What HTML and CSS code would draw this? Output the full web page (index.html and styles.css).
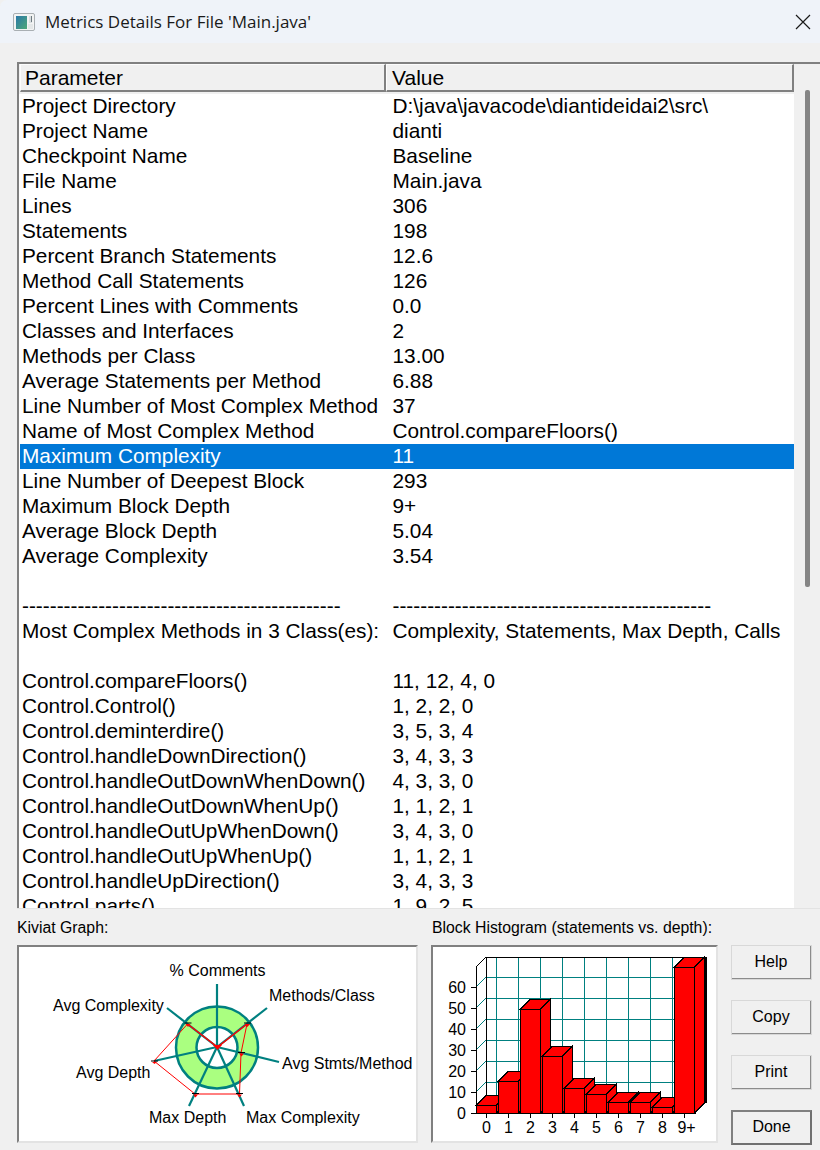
FILE: index.html
```html
<!DOCTYPE html>
<html lang="en">
<head>
<meta charset="utf-8">
<title>Metrics Details For File 'Main.java'</title>
<link rel="stylesheet" href="styles.css">
</head>
<body>
<div class="window">
  <header class="titlebar">
    <svg class="app-icon" viewBox="0 0 23 20" width="23" height="20">
      <defs><linearGradient id="ig" x1="0" y1="0" x2="1" y2="1"><stop offset="0" stop-color="#2a78a8"/><stop offset="1" stop-color="#4fa878"/></linearGradient></defs>
      <rect x="0.500" y="1.500" width="21" height="17" rx="1.500" fill="#f2f3f3" stroke="#a9afb3"/>
      <rect x="3" y="4" width="11" height="13" fill="url(#ig)"/>
      <rect x="16" y="4" width="3" height="7" fill="#d8dde0"/>
      <rect x="18" y="4" width="1" height="6" fill="#6d7a80"/>
      <rect x="15" y="12" width="5" height="5" fill="#e4e7e8"/>
    </svg>
    <span class="title">Metrics Details For File 'Main.java'</span>
    <svg class="close" viewBox="0 0 16 16" width="16" height="16"><path d="M1 1 L15 15 M15 1 L1 15" stroke="#1a1a1a" stroke-width="1.2" fill="none"/></svg>
  </header>

  <section class="list">
    <div class="list-main">
      <div class="list-head">
        <div class="hcell hcell-a">Parameter</div>
        <div class="hcell hcell-b">Value</div>
      </div>
      <div class="rows">
        <div class="row"><span>Project Directory</span><span>D:\java\javacode\diantideidai2\src\</span></div>
        <div class="row"><span>Project Name</span><span>dianti</span></div>
        <div class="row"><span>Checkpoint Name</span><span>Baseline</span></div>
        <div class="row"><span>File Name</span><span>Main.java</span></div>
        <div class="row"><span>Lines</span><span>306</span></div>
        <div class="row"><span>Statements</span><span>198</span></div>
        <div class="row"><span>Percent Branch Statements</span><span>12.6</span></div>
        <div class="row"><span>Method Call Statements</span><span>126</span></div>
        <div class="row"><span>Percent Lines with Comments</span><span>0.0</span></div>
        <div class="row"><span>Classes and Interfaces</span><span>2</span></div>
        <div class="row"><span>Methods per Class</span><span>13.00</span></div>
        <div class="row"><span>Average Statements per Method</span><span>6.88</span></div>
        <div class="row"><span>Line Number of Most Complex Method</span><span>37</span></div>
        <div class="row"><span>Name of Most Complex Method</span><span>Control.compareFloors()</span></div>
        <div class="row row-selected"><span>Maximum Complexity</span><span>11</span></div>
        <div class="row"><span>Line Number of Deepest Block</span><span>293</span></div>
        <div class="row"><span>Maximum Block Depth</span><span>9+</span></div>
        <div class="row"><span>Average Block Depth</span><span>5.04</span></div>
        <div class="row"><span>Average Complexity</span><span>3.54</span></div>
        <div class="row"></div>
        <div class="row"><span>----------------------------------------------</span><span>----------------------------------------------</span></div>
        <div class="row"><span>Most Complex Methods in 3 Class(es):</span><span>Complexity, Statements, Max Depth, Calls</span></div>
        <div class="row"></div>
        <div class="row"><span>Control.compareFloors()</span><span>11, 12, 4, 0</span></div>
        <div class="row"><span>Control.Control()</span><span>1, 2, 2, 0</span></div>
        <div class="row"><span>Control.deminterdire()</span><span>3, 5, 3, 4</span></div>
        <div class="row"><span>Control.handleDownDirection()</span><span>3, 4, 3, 3</span></div>
        <div class="row"><span>Control.handleOutDownWhenDown()</span><span>4, 3, 3, 0</span></div>
        <div class="row"><span>Control.handleOutDownWhenUp()</span><span>1, 1, 2, 1</span></div>
        <div class="row"><span>Control.handleOutUpWhenDown()</span><span>3, 4, 3, 0</span></div>
        <div class="row"><span>Control.handleOutUpWhenUp()</span><span>1, 1, 2, 1</span></div>
        <div class="row"><span>Control.handleUpDirection()</span><span>3, 4, 3, 3</span></div>
        <div class="row"><span>Control.parts()</span><span>1, 9, 2, 5</span></div>
      </div>
    </div>
    <div class="scrollbar"><div class="thumb"></div></div>
  </section>

  <section class="bottom">
    <div class="col col-kiviat">
      <div class="caption">Kiviat Graph:</div>
      <div class="panel">
        <svg class="chart" viewBox="19 947 397 194" width="397" height="194">
          <circle cx="217" cy="1047.500" r="41" fill="#aaff80" stroke="#008080" stroke-width="2.500"/>
          <circle cx="217" cy="1047.500" r="20.500" fill="#fff" stroke="#008080" stroke-width="2.500"/>
          <g stroke="#008080" stroke-width="2.200" fill="none">
            <path d="M217 1047 V984"/>
            <path d="M217 1047 L267 1008"/>
            <path d="M217 1047 L279 1062"/>
            <path d="M217 1047 L244 1106"/>
            <path d="M217 1047 L189 1106"/>
            <path d="M217 1047 L154 1061"/>
            <path d="M217 1047 L167 1008"/>
          </g>
          <path d="M247 1024 L241 1053 L239.500 1094 L195 1094 L154 1061 L187.500 1024" stroke="#ff0000" stroke-width="1" fill="none"/>
          <path d="M187.500 1024 L217.500 1047 L247 1024" stroke="#ff0000" stroke-width="1.400" fill="none"/>
          <path d="M184.500 1023 H191.500 M244 1023 H251 M238 1052.500 H245 M192 1093.500 H199 M236 1093.500 H243 M151 1061 H158" stroke="#000" stroke-width="1.200"/>
          <g fill="#ff0000">
            <path d="M185.500 1024 H190.500 L188 1027 Z"/>
            <path d="M245 1024 H250 L247.500 1027 Z"/>
            <path d="M239 1053.500 H244 L241.500 1056.500 Z"/>
            <path d="M193 1094.500 H198 L195.500 1097.500 Z"/>
            <path d="M237 1094.500 H242 L239.500 1097.500 Z"/>
            <path d="M152 1062 H157 L154.500 1064 Z"/>
            <path d="M213 1045 H222 L217.500 1050 Z"/>
          </g>
          <g class="chart-text">
            <text x="169.500" y="976">% Comments</text>
            <text x="269" y="1001">Methods/Class</text>
            <text x="53" y="1011">Avg Complexity</text>
            <text x="282" y="1069">Avg Stmts/Method</text>
            <text x="76" y="1078">Avg Depth</text>
            <text x="149" y="1123">Max Depth</text>
            <text x="246" y="1123">Max Complexity</text>
          </g>
        </svg>
      </div>
    </div>

    <div class="col col-hist">
      <div class="caption">Block Histogram (statements vs. depth):</div>
      <div class="panel">
        <svg class="chart" viewBox="433 947 282 194" width="282" height="194" shape-rendering="crispEdges">
          <g stroke="#008080" fill="none">
            <path d="M486 977 H706 M486 998 H706 M486 1019 H706 M486 1040 H706 M486 1061 H706 M486 1082 H706"/>
            <path d="M496 957 V1103 M518 957 V1103 M540 957 V1103 M562 957 V1103 M584 957 V1103 M606 957 V1103 M628 957 V1103 M650 957 V1103 M672 957 V1103"/>
            <path d="M476 987 L486 977 M476 1008 L486 998 M476 1029 L486 1019 M476 1050 L486 1040 M476 1071 L486 1061 M476 1092 L486 1082"/>
          </g>
          <path d="M486 957 H705 M486 957 V1103 M476 967 V1113 M476 1113 H696" stroke="#000" fill="none"/>
          <path d="M476 967 L486 957" stroke="#000" fill="none"/>
          <path d="M471 987 H476 M471 1008 H476 M471 1029 H476 M471 1050 H476 M471 1071 H476 M471 1092 H476 M471 1113 H476 M486 1113 V1118 M508 1113 V1118 M530 1113 V1118 M552 1113 V1118 M574 1113 V1118 M596 1113 V1118 M618 1113 V1118 M640 1113 V1118 M662 1113 V1118 M684 1113 V1118" stroke="#000" fill="none"/>
          <g class="bars" fill="#ff0000" stroke="#000">
            <path d="M476.500 1105 L486.500 1095 H506.500 L496.500 1105 Z M496.500 1105 L506.500 1095 V1103 L496.500 1113 Z M476.500 1105 H496.500 V1113 H476.500 Z"/>
            <path d="M498.500 1081 L508.500 1071 H528.500 L518.500 1081 Z M518.500 1081 L528.500 1071 V1103 L518.500 1113 Z M498.500 1081 H518.500 V1113 H498.500 Z"/>
            <path d="M520.500 1009 L530.500 999 H550.500 L540.500 1009 Z M540.500 1009 L550.500 999 V1103 L540.500 1113 Z M520.500 1009 H540.500 V1113 H520.500 Z"/>
            <path d="M542.500 1056 L552.500 1046 H572.500 L562.500 1056 Z M562.500 1056 L572.500 1046 V1103 L562.500 1113 Z M542.500 1056 H562.500 V1113 H542.500 Z"/>
            <path d="M564.500 1088 L574.500 1078 H594.500 L584.500 1088 Z M584.500 1088 L594.500 1078 V1103 L584.500 1113 Z M564.500 1088 H584.500 V1113 H564.500 Z"/>
            <path d="M586.500 1094 L596.500 1084 H616.500 L606.500 1094 Z M606.500 1094 L616.500 1084 V1103 L606.500 1113 Z M586.500 1094 H606.500 V1113 H586.500 Z"/>
            <path d="M608.500 1102 L618.500 1092 H638.500 L628.500 1102 Z M628.500 1102 L638.500 1092 V1103 L628.500 1113 Z M608.500 1102 H628.500 V1113 H608.500 Z"/>
            <path d="M630.500 1102 L640.500 1092 H660.500 L650.500 1102 Z M650.500 1102 L660.500 1092 V1103 L650.500 1113 Z M630.500 1102 H650.500 V1113 H630.500 Z"/>
            <path d="M652.500 1107 L662.500 1097 H682.500 L672.500 1107 Z M672.500 1107 L682.500 1097 V1103 L672.500 1113 Z M652.500 1107 H672.500 V1113 H652.500 Z"/>
            <path d="M674.500 967 L684.500 957 H704.500 L694.500 967 Z M694.500 967 L704.500 957 V1103 L694.500 1113 Z M674.500 967 H694.500 V1113 H674.500 Z"/>
          </g>
          <path d="M705.500 957 V1103" stroke="#000" stroke-width="2" fill="none"/>
          <g class="chart-text chart-text-axis">
            <text x="466" y="993">60</text>
            <text x="466" y="1014">50</text>
            <text x="466" y="1035">40</text>
            <text x="466" y="1056">30</text>
            <text x="466" y="1077">20</text>
            <text x="466" y="1098">10</text>
            <text x="466" y="1119">0</text>
          </g>
          <g class="chart-text chart-text-mid">
            <text x="486.500" y="1133">0</text>
            <text x="508.500" y="1133">1</text>
            <text x="530.500" y="1133">2</text>
            <text x="552.500" y="1133">3</text>
            <text x="574.500" y="1133">4</text>
            <text x="596.500" y="1133">5</text>
            <text x="618.500" y="1133">6</text>
            <text x="640.500" y="1133">7</text>
            <text x="662.500" y="1133">8</text>
            <text x="686.500" y="1133">9+</text>
          </g>
        </svg>
      </div>
    </div>

    <div class="buttons">
      <button class="btn" type="button">Help</button>
      <button class="btn" type="button">Copy</button>
      <button class="btn" type="button">Print</button>
      <button class="btn btn-default" type="button">Done</button>
    </div>
  </section>
</div>
</body>
</html>
```

FILE: styles.css
```css
* { box-sizing: border-box; }

html, body {
  margin: 0;
  padding: 0;
  width: 820px;
  height: 1150px;
  overflow: hidden;
  background: #f0f0f0;
}

.window {
  width: 820px;
  height: 1150px;
  display: flex;
  flex-direction: column;
  font-family: "Liberation Sans", Arial, sans-serif;
  color: #000;
}

.titlebar {
  height: 43px;
  flex: none;
  display: flex;
  align-items: center;
  padding: 0 9px 0 13px;
  background: #eff3f9;
  border-top-left-radius: 7px;
}

.app-icon { flex: none; }

.title {
  flex: 1;
  margin-left: 9px;
  font-family: "Open Sans", "Noto Sans", sans-serif;
  font-size: 17px;
  color: #1a1a1a;
}

.close { flex: none; }

.list {
  flex: none;
  height: 847px;
  margin-top: 19px;
  margin-left: 17px;
  display: flex;
  border-top: 2px solid #808080;
  border-bottom: 1px solid #e3e3e3;
}

.list-main {
  width: 778px;
  flex: none;
  display: flex;
  flex-direction: column;
  border-left: 2px solid #808080;
  overflow: hidden;
}

.list-head {
  flex: none;
  display: flex;
  height: 30px;
  padding-left: 1px;
}

.hcell {
  height: 28px;
  font-size: 21px;
  line-height: 26px;
  padding-left: 4px;
  background: #f0f0f0;
  border-top: 1px solid #fcfcfc;
  border-left: 1px solid #fcfcfc;
  border-right: 2px solid #808080;
  border-bottom: 2px solid #808080;
}

.hcell-a { width: 366px; }
.hcell-b { width: 408px; padding-left: 5px; }

.rows {
  flex: 1;
  overflow: hidden;
  background: #fff;
  margin-right: 1px;
  border-left: 1px solid #fff;
}

.row {
  display: flex;
  height: 25px;
  padding-left: 2px;
  font-size: 20.800px;
  line-height: 23px;
  white-space: nowrap;
}

.row span:first-child { width: 370.500px; flex: none; }

.row-selected {
  background: #0078d7;
  color: #fff;
}

.scrollbar {
  flex: 1;
  padding: 26px 0 0 10px;
}

.thumb {
  width: 5px;
  height: 497px;
  border-radius: 2px;
  background: #858585;
}

.bottom {
  flex: 1;
  display: flex;
  padding-left: 17px;
}

.col { display: flex; flex-direction: column; }
.col-kiviat { width: 401px; margin-right: 13px; }
.col-hist { width: 287px; margin-right: 13px; }

.caption {
  height: 36px;
  padding-top: 9px;
  font-size: 15.800px;
  line-height: 20px;
  white-space: nowrap;
}

.col-hist .caption { padding-left: 1px; }

.panel {
  height: 198px;
  background: #fff;
  border-top: 2px solid #808080;
  border-left: 2px solid #808080;
  border-right: 2px solid #e3e3e3;
  border-bottom: 2px solid #e3e3e3;
}

.chart { display: block; }

.chart-text text {
  font-family: "Liberation Sans", Arial, sans-serif;
  font-size: 16px;
  fill: #000;
}

.chart-text-axis text { text-anchor: end; }
.chart-text-mid text { text-anchor: middle; }

.buttons {
  width: 81px;
  padding-top: 36px;
  display: flex;
  flex-direction: column;
  gap: 20.500px;
}

.btn {
  height: 34.500px;
  padding: 0;
  font-family: "Liberation Sans", Arial, sans-serif;
  font-size: 16px;
  color: #000;
  background: #f0f0f0;
  border-top: 1px solid #fff;
  border-left: 1px solid #fff;
  border-right: 2px solid #8c8c8c;
  border-bottom: 2px solid #8c8c8c;
  outline: 1px solid #d8d8d8;
  outline-offset: -1px;
}

.btn-default {
  outline: none;
  border: 2px solid #707070;
  border-top-color: #808080;
  border-left-color: #808080;
}
```
